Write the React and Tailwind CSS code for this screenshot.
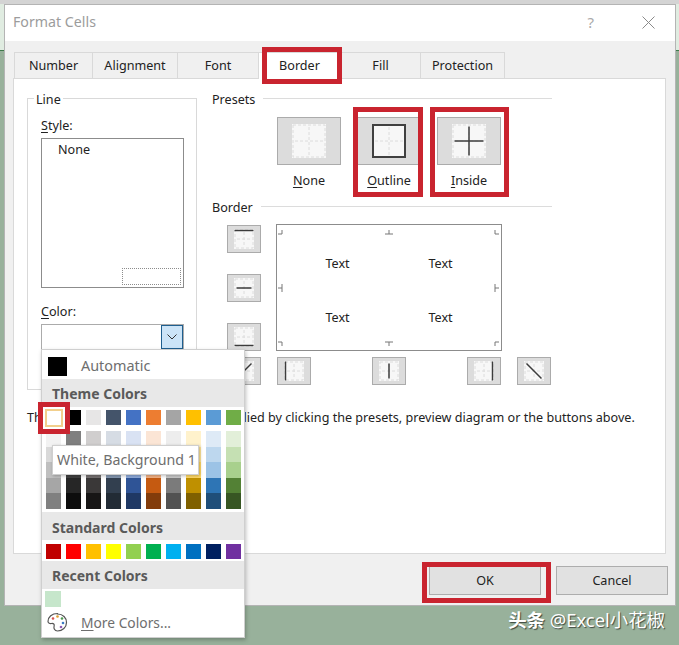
import React from "react";

const THEME_TOP = ["bg-white","bg-[#000000]","bg-[#e7e6e6]","bg-[#44546a]","bg-[#4472c4]","bg-[#ed7d31]","bg-[#a5a5a5]","bg-[#ffc000]","bg-[#5b9bd5]","bg-[#70ad47]"];
const THEME_TINTS = [
  "bg-[#f2f2f2]","bg-[#7f7f7f]","bg-[#d0cece]","bg-[#d6dce4]","bg-[#d9e2f3]","bg-[#fbe5d5]","bg-[#ededed]","bg-[#fff2cc]","bg-[#deeaf6]","bg-[#e2efd9]",
  "bg-[#d9d9d9]","bg-[#595959]","bg-[#afabab]","bg-[#adb9ca]","bg-[#b4c6e7]","bg-[#f7cbac]","bg-[#dbdbdb]","bg-[#fee599]","bg-[#bdd7ee]","bg-[#c5e0b3]",
  "bg-[#bfbfbf]","bg-[#3f3f3f]","bg-[#757070]","bg-[#8497b0]","bg-[#8eaadb]","bg-[#f4b183]","bg-[#c9c9c9]","bg-[#ffd966]","bg-[#9cc3e6]","bg-[#a8d08d]",
  "bg-[#a6a6a6]","bg-[#262626]","bg-[#3a3838]","bg-[#323f4f]","bg-[#2f5496]","bg-[#c55a11]","bg-[#7b7b7b]","bg-[#bf9000]","bg-[#2e75b5]","bg-[#538135]",
  "bg-[#808080]","bg-[#0d0d0d]","bg-[#171616]","bg-[#222b35]","bg-[#1f3864]","bg-[#833c0b]","bg-[#525252]","bg-[#7f6000]","bg-[#1f4e79]","bg-[#375623]",
];
const STANDARD = ["bg-[#c00000]","bg-[#ff0000]","bg-[#ffc000]","bg-[#ffff00]","bg-[#92d050]","bg-[#00b050]","bg-[#00b0f0]","bg-[#0070c0]","bg-[#002060]","bg-[#7030a0]"];

function BorderIcon({ size, lines = [], outer }) {
  const a = 1.5;
  const b = size - 1.5;
  const c = size / 2;
  const L = {
    top: [a - 1, a, b + 1, a],
    hmid: [a + 1, c, b - 1, c],
    bottom: [a - 1, b, b + 1, b],
    left: [a, a - 1, a, b + 1],
    vmid: [c, a + 1, c, b - 1],
    right: [b, a - 1, b, b + 1],
    diag1: [a + 1, b - 1, b - 1, a + 1],
    diag2: [a + 1, a + 1, b - 1, b - 1],
  };
  return (
    <svg width={size} height={size} viewBox={`0 0 ${size} ${size}`}>
      <rect x="0" y="0" width={size} height={size} fill="#f7f7f7" />
      {!outer && <rect x="1" y="1" width={size - 2} height={size - 2} fill="none" stroke="#dcdcdc" strokeWidth="1" strokeDasharray="3 2" />}
      <line x1={c} y1="3" x2={c} y2={size - 3} stroke="#dcdcdc" strokeWidth="1" strokeDasharray="3 2" />
      <line x1="3" y1={c} x2={size - 3} y2={c} stroke="#dcdcdc" strokeWidth="1" strokeDasharray="3 2" />
      {outer && <rect x="1" y="1" width={size - 2} height={size - 2} fill="none" stroke="#404040" strokeWidth="2" />}
      {lines.map((k) => (
        <line key={k} x1={L[k][0]} y1={L[k][1]} x2={L[k][2]} y2={L[k][3]} stroke="#3c3c3c" strokeWidth="1.5" />
      ))}
    </svg>
  );
}

function SmallBtn({ lines, className = "" }) {
  return (
    <div className={`w-[34px] h-[28px] bg-[#dcdcdc] border border-[#ababab] flex items-center justify-center ${className}`}>
      <BorderIcon size={20} lines={lines} />
    </div>
  );
}

function Preset({ u, rest, lines, outer }) {
  return (
    <div className="w-[64px] flex flex-col items-center">
      <div className="w-[64px] h-[48px] bg-[#dcdcdc] border border-[#ababab] flex items-center justify-center">
        <BorderIcon size={34} lines={lines} outer={outer} />
      </div>
      <div className="mt-[7px] leading-[18px] text-[#222]">
        <span className="underline underline-offset-2">{u}</span>{rest}
      </div>
    </div>
  );
}

function Header({ children, className = "" }) {
  return (
    <div className={`h-[14px] flex items-center ${className}`}>
      <span className="leading-[14px] translate-y-px">{children}</span>
      <div className="flex-1 h-px bg-[#dcdcdc] ml-[8px] -mt-[2px]" />
    </div>
  );
}

function Tab({ w, children, active }) {
  return (
    <div className={`h-[26px] flex items-center justify-center border-t border-r border-[#d9d9d9] ${w} ${active ? "bg-white h-[27px] -mb-px relative z-10 pt-px" : "bg-[#f0f0f0] first:border-l pt-[2px]"}`}>
      {children}
    </div>
  );
}

function SectionHead({ children, className = "" }) {
  return (
    <div className={`h-[28px] bg-[#e8e8e8] flex items-center pl-[10px] font-bold text-[14px] text-[#5a5a5a] ${className}`}>
      {children}
    </div>
  );
}

function Palette() {
  return (
    <div className="absolute left-[36px] top-[344px] w-[204px] h-[289px] bg-white border border-[#cfcfcf] shadow-[1px_2px_4px_rgba(0,0,0,0.25)] z-20">
      <div className="flex items-center h-[28px] pt-[4px] pl-[6px]">
        <div className="w-[19px] h-[19px] bg-black" />
        <span className="ml-[14px] text-[14.4px] text-[#6e6e6e]">Automatic</span>
      </div>
      <SectionHead className="mt-[1px]">Theme Colors</SectionHead>
      <div className="grid grid-cols-[repeat(10,15px)] gap-x-[5px] pl-[4px] mt-[3px]">
        {THEME_TOP.map((c, i) => (
          <div key={i} className={`h-[15px] ${c}`} />
        ))}
      </div>
      <div className="grid grid-cols-[repeat(10,15px)] gap-x-[5px] pl-[4px] mt-[6px]">
        {THEME_TINTS.map((c, i) => (
          <div key={i} className={`h-[15.6px] ${c}`} />
        ))}
      </div>
      <SectionHead className="mt-[3px] pt-[3px]">Standard Colors</SectionHead>
      <div className="grid grid-cols-[repeat(10,15px)] gap-x-[5px] pl-[4px] mt-[4px]">
        {STANDARD.map((c, i) => (
          <div key={i} className={`h-[15px] ${c}`} />
        ))}
      </div>
      <SectionHead className="mt-[2px] pt-[1px]">Recent Colors</SectionHead>
      <div className="w-[16px] h-[16px] bg-[#c6e6cb] ml-[3px] mt-[2px]" />
      <div className="flex items-center h-[30px] mt-[1px] pl-[5px]">
        <svg width="21" height="21" viewBox="0 0 21 21">
          <path d="M10.5 1.5C5 1.5 1 5 1 9.5c0 1.6 2 2.3 3.5 2 2-.3 3.2.8 2.6 2.6-.6 2 .3 4.9 3.4 4.9 5 0 9-3.8 9-8.5s-3.5-8.5-9-8.5Z" fill="#fff" stroke="#555" strokeWidth="1.2" />
          <circle cx="6" cy="6.5" r="1.3" fill="#d9534f" />
          <circle cx="10.5" cy="4.5" r="1.3" fill="#e0a030" />
          <circle cx="15" cy="6.5" r="1.3" fill="#4e9a51" />
          <circle cx="16" cy="11" r="1.3" fill="#3b7ac4" />
          <circle cx="14" cy="15" r="1.3" fill="#8e5bb5" />
        </svg>
        <span className="ml-[13px] text-[13.8px] text-[#6e6e6e]">
          <span className="underline underline-offset-2">M</span>ore Colors...
        </span>
      </div>
    </div>
  );
}

function Marks() {
  const d = "M5 5V9H1 M112 5V9 M108 9H116 M218 5V9H222 M5 59V67 M1 63H5 M218 59V67 M218 63H222 M1 117H5V121 M108 117H116 M112 117V121 M222 117H218V121";
  return (
    <svg className="absolute left-0 top-0" width="224" height="125" viewBox="0 0 224 125">
      <path d={d} fill="none" stroke="#777" strokeWidth="1" />
    </svg>
  );
}

export default function App() {
  const red = "absolute border-[5px] border-[#c9242f] z-30 pointer-events-none";
  return (
    <div
      className="relative w-[679px] h-[645px] overflow-hidden pt-[4px] pl-[4px] bg-[linear-gradient(to_bottom,#d4d4d4_0,#d4d4d4_4px,#e0ece1_4px,#e0ece1_50px,#3f7a4c_50px,#3f7a4c_51px,#98b19b_51px)] text-[12.6px] text-[#222]"
      style={{ fontFamily: '"Noto Sans", "Noto Sans CJK SC", sans-serif' }}
    >
      <div className="relative w-[672px] h-[602px] bg-[#f0f0f0] border border-[#b4b4b4]">
        {/* title bar */}
        <div className="h-[36px] bg-white flex items-center pl-[8px] pr-[20px] pb-[2px]">
          <span className="text-[14.2px] text-[#9c9c9c] flex-1">Format Cells</span>
          <span className="text-[15px] text-[#aaaaaa] mr-[48px]">?</span>
          <svg width="13" height="13" viewBox="0 0 13 13">
            <path d="M.5.5l12 12M12.5.5l-12 12" stroke="#8a8a8a" strokeWidth="1" fill="none" />
          </svg>
        </div>

        {/* tabs */}
        <div className="flex ml-[9px] mt-[11px]">
          <Tab w="w-[79px]">Number</Tab>
          <Tab w="w-[85px]">Alignment</Tab>
          <Tab w="w-[81px]">Font</Tab>
          <Tab w="w-[82px]" active>Border</Tab>
          <Tab w="w-[80px]">Fill</Tab>
          <Tab w="w-[84px]">Protection</Tab>
        </div>

        {/* panel */}
        <div className="ml-[8px] w-[653px] h-[476px] bg-white border border-[#d9d9d9]">
          <div className="flex">
            {/* Line group */}
            <div className="ml-[13px] mt-[19px] w-[170px] h-[292px] border border-[#d9d9d9] px-[13px]">
              <div className="-mt-[6px] ml-[-7px] w-fit px-[2px] bg-white leading-[14px]">Line</div>
              <div className="mt-[11px] leading-[16px]"><span className="underline underline-offset-2">S</span>tyle:</div>
              <div className="relative mt-[4px] w-[143px] h-[150px] border border-[#8c8c8c] pl-[16px] pt-[2px] leading-[18px]">
                None
                <div className="absolute right-[2px] bottom-[2px] w-[59px] h-[17px] border border-dotted border-[#8c8c8c]" />
              </div>
              <div className="mt-[16px] leading-[16px]"><span className="underline underline-offset-2">C</span>olor:</div>
              <div className="mt-[4px] w-[143px] h-[26px] border border-[#ababab] flex justify-end">
                <div className="w-[22px] h-full bg-[#cce4f7] border border-[#1f5f8f] flex items-center justify-center">
                  <svg width="10" height="6" viewBox="0 0 10 6"><path d="M.5.5 5 5 9.5.5" fill="none" stroke="#333" strokeWidth="1" /></svg>
                </div>
              </div>
            </div>

            {/* Right column */}
            <div className="ml-[15px] mt-[13px] w-[340px]">
              <Header>Presets</Header>
              <div className="flex gap-x-[16px] ml-[65px] mt-[11px]">
                <Preset u="N" rest="one" />
                <Preset u="O" rest="utline" outer />
                <Preset u="I" rest="nside" lines={["hmid", "vmid"]} />
              </div>
              <Header className="mt-[10px]">Border</Header>
              <div className="flex ml-[15px] mt-[10px]">
                <div className="flex flex-col gap-y-[21px] pt-[1px]">
                  <SmallBtn lines={["top"]} />
                  <SmallBtn lines={["hmid"]} />
                  <SmallBtn lines={["bottom"]} />
                </div>
                <div className="relative ml-[15px] w-[226px] h-[127px] border border-[#8c8c8c] grid grid-cols-2 px-[9px] pt-[12px] auto-rows-[54px] bg-white">
                  <Marks />
                  <div className="flex items-center justify-center">Text</div>
                  <div className="flex items-center justify-center">Text</div>
                  <div className="flex items-center justify-center">Text</div>
                  <div className="flex items-center justify-center">Text</div>
                </div>
              </div>
              <div className="flex ml-[15px] mt-[6px]">
                <SmallBtn lines={["diag1"]} />
                <SmallBtn className="ml-[16px]" lines={["left"]} />
                <SmallBtn className="ml-[61px]" lines={["vmid"]} />
                <SmallBtn className="ml-[61px]" lines={["right"]} />
                <SmallBtn className="ml-[16px]" lines={["diag2"]} />
              </div>
            </div>
          </div>
          <div className="ml-[13px] mt-[19px] leading-[18px] whitespace-nowrap">
            The selected border style can be applied by clicking the presets, preview diagram or the buttons above.
          </div>
        </div>

        {/* footer */}
        <div className="flex justify-end gap-x-[15px] pr-[7px] pt-[12px]">
          <div className="w-[112px] h-[29px] pt-[2px] bg-[#e1e1e1] border border-[#adadad] flex items-center justify-center">OK</div>
          <div className="w-[112px] h-[29px] pt-[2px] bg-[#e1e1e1] border border-[#adadad] flex items-center justify-center">Cancel</div>
        </div>

        <Palette />

        {/* Tooltip */}
        <div className="absolute left-[47px] top-[440px] w-[147px] h-[30px] bg-white border border-[#cfcfcf] shadow-[1px_1px_3px_rgba(0,0,0,0.25)] z-30 flex items-center pl-[4px] text-[14.2px] text-[#6e6e6e] whitespace-nowrap">
          White, Background 1
        </div>

        {/* Swatch highlight */}
        <div className={`${red} left-[33px] top-[397px] w-[32px] h-[32px] flex items-center justify-center`}>
          <div className="w-[18px] h-[18px] bg-white border-2 border-[#f2cf8c]" />
        </div>

        {/* Red highlights */}
        <div className={`${red} left-[257px] top-[42px] w-[80px] h-[37px]`} />
        <div className={`${red} left-[348px] top-[102px] w-[70px] h-[90px]`} />
        <div className={`${red} left-[425px] top-[102px] w-[79px] h-[90px]`} />
        <div className={`${red} left-[417px] top-[557px] w-[129px] h-[41px]`} />
      </div>

      {/* Watermark */}
      <div className="absolute right-[14px] top-[609px] text-[18.4px] leading-[22px] text-white whitespace-nowrap [text-shadow:1px_1px_1px_rgba(0,0,0,0.6)]">
        <span className="font-bold">头条</span> @Excel小花椒
      </div>
    </div>
  );
}
